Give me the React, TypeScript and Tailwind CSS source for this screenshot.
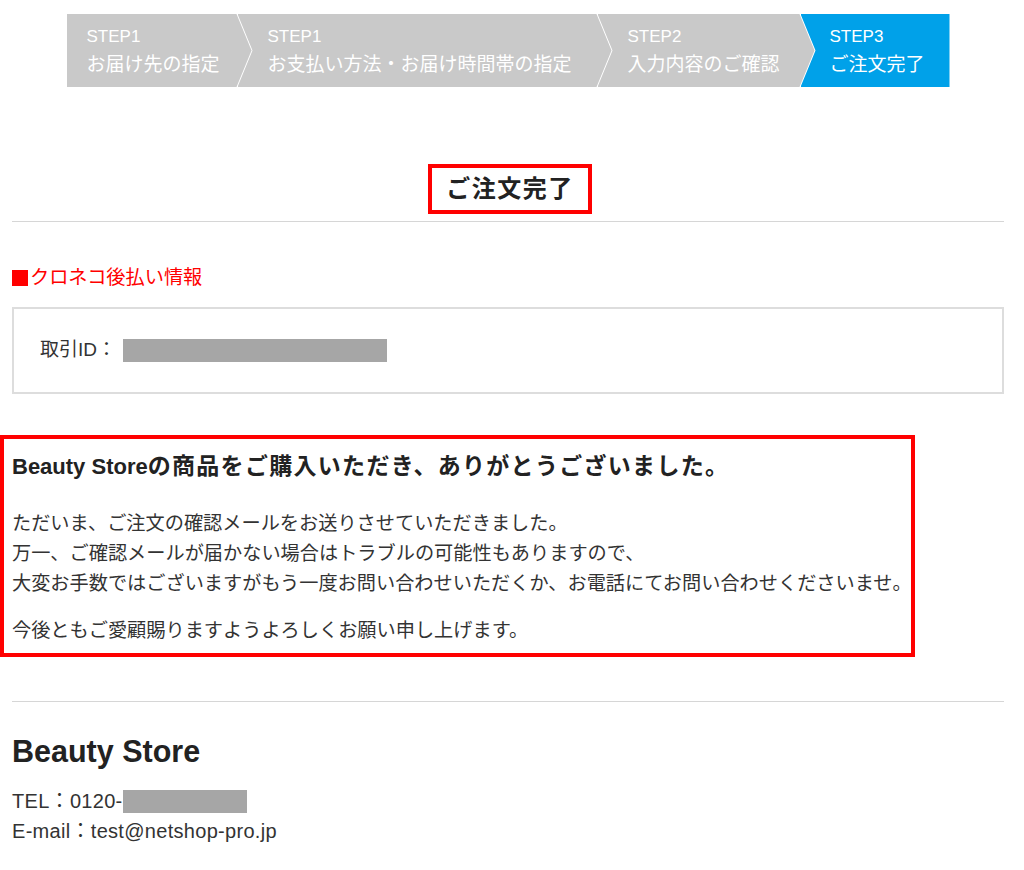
import React from "react";

const font = '"Liberation Sans", "Noto Sans CJK JP", sans-serif';

const mid =
  "[clip-path:polygon(0_0,calc(100%_-_15px)_0,100%_50%,calc(100%_-_15px)_100%,0_100%,15px_50%)]";
const first =
  "[clip-path:polygon(0_0,calc(100%_-_15px)_0,100%_50%,calc(100%_-_15px)_100%,0_100%)]";
const last = "[clip-path:polygon(0_0,100%_0,100%_100%,0_100%,15px_50%)]";

function Step({
  label,
  text,
  className,
}: {
  label: string;
  text: string;
  className: string;
}) {
  return (
    <div className={`flex h-full shrink-0 flex-col justify-center text-white ${className}`}>
      <div className="text-[17px] leading-[28px]">{label}</div>
      <div className="text-[19px] leading-[28px] whitespace-nowrap">{text}</div>
    </div>
  );
}

export default function App() {
  return (
    <div
      className="min-h-[870px] bg-white pl-3 pr-5 text-[#333]"
      style={{ fontFamily: font }}
    >
      {/* step bar */}
      <div className="mx-auto mt-[14px] flex h-[73px] w-[883px]">
        <Step
          label="STEP1"
          text="お届け先の指定"
          className={`w-[185px] bg-[#c9c9c9] pl-5 ${first}`}
        />
        <Step
          label="STEP1"
          text="お支払い方法・お届け時間帯の指定"
          className={`-ml-[14px] w-[374px] bg-[#c9c9c9] pl-[30px] ${mid}`}
        />
        <Step
          label="STEP2"
          text="入力内容のご確認"
          className={`-ml-[14px] w-[217px] bg-[#c9c9c9] pl-[30px] ${mid}`}
        />
        <Step
          label="STEP3"
          text="ご注文完了"
          className={`-ml-[14px] w-[149px] bg-[#00a1e9] pl-[29px] ${last}`}
        />
      </div>

      {/* heading */}
      <div className="mt-[77px] flex justify-center">
        <h1 className="ml-1 border-4 border-[#ff0000] px-[14px] text-[24px] font-bold leading-[42px] tracking-[1.5px] text-[#222]">
          ご注文完了
        </h1>
      </div>
      <div className="mt-[7px] border-t-[1.5px] border-[#d6d6d6]" />

      {/* kuroneko */}
      <div className="mt-[42px] flex items-center text-[19.2px] leading-[28px] text-[#ff0000]">
        <span className="mr-[2px] inline-block h-[16px] w-[16px] bg-[#ff0000]" />
        クロネコ後払い情報
      </div>
      <div className="mt-[15px] flex h-[87px] items-center border-2 border-[#dddddd] pl-[26px]">
        <span className="text-[19px]">取引ID：</span>
        <span className="ml-[7px] h-[23px] w-[264px] bg-[#a6a6a6]" />
      </div>

      {/* thanks message */}
      <div className="-ml-3 mt-[41px] w-[915px] border-4 border-[#ff0000] pb-[7px] pl-2 pt-3">
        <h2 className="whitespace-nowrap text-[22px] font-bold leading-[30px] text-[#222]">
          Beauty Store
          <span className="text-[23px] tracking-[1.3px]">
            の商品をご購入いただき、ありがとうございました。
          </span>
        </h2>
        <p className="mt-[27px] whitespace-nowrap text-[19.2px] leading-[30px]">
          ただいま、ご注文の確認メールをお送りさせていただきました。
          <br />
          万一、ご確認メールが届かない場合はトラブルの可能性もありますので、
          <br />
          大変お手数ではございますがもう一度お問い合わせいただくか、お電話にてお問い合わせくださいませ。
        </p>
        <p className="mt-[17px] whitespace-nowrap text-[19.2px] leading-[30px]">
          今後ともご愛顧賜りますようよろしくお願い申し上げます。
        </p>
      </div>

      <div className="mt-[44px] border-t-[1.5px] border-[#d6d6d6]" />

      {/* store info */}
      <div className="mt-[29px] text-[30.5px] font-bold leading-[40px] text-[#222]">
        Beauty Store
      </div>
      <div className="mt-[15px] flex items-center text-[20px] leading-[30px] tracking-[0.3px]">
        <span>TEL：0120-</span>
        <span className="h-[23px] w-[124px] bg-[#a6a6a6]" />
      </div>
      <div className="text-[20px] leading-[30px] tracking-[0.3px]">E-mail：test@netshop-pro.jp</div>
    </div>
  );
}
